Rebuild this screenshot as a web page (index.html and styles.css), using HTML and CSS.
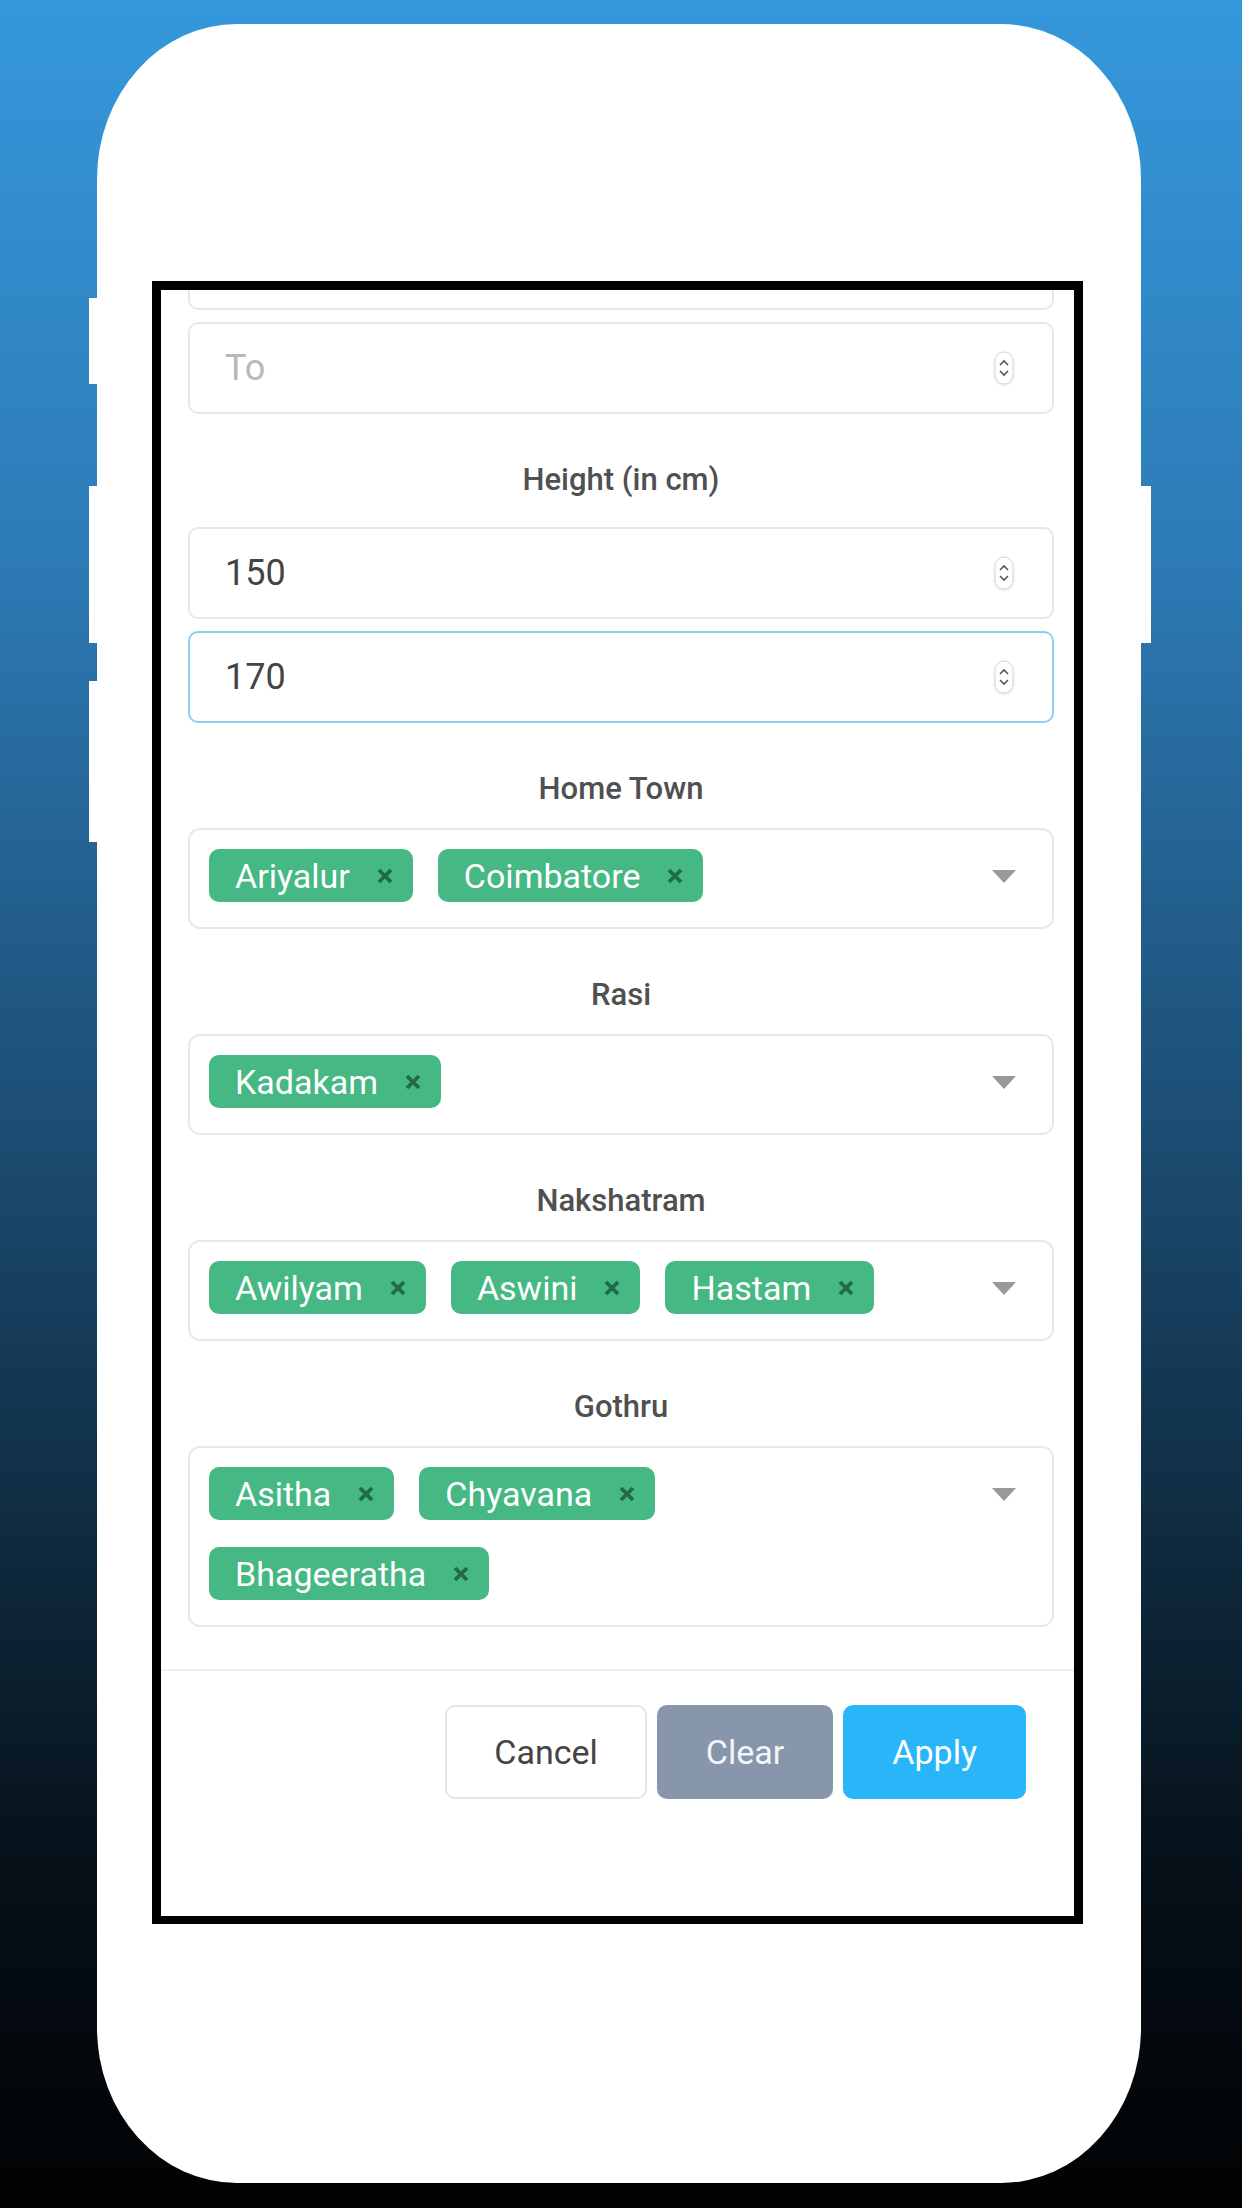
FILE: index.html
```html
<!DOCTYPE html>
<html>
<head>
    <title>Filter</title>
    <meta name="viewport" content="width=device-width, initial-scale=1">
    <link rel="stylesheet" href="styles.css">
</head>
<body>
    <div class="phone">
        <!-- side keys -->
        <span class="key key-left key-1"></span>
        <span class="key key-left key-2"></span>
        <span class="key key-left key-3"></span>
        <span class="key key-right key-2"></span>

        <div class="frame">
            <div class="sheet-body">
                <div class="num-input partial"></div>
                <div class="num-input">
                    <span class="placeholder">To</span>
                    <svg class="spin" width="20" height="34" viewBox="0 0 20 34"><rect x="1" y="1" width="18" height="32" rx="9" fill="#fff" stroke="#d6d6d6"/><path d="M6 14l4-4 4 4M6 20l4 4 4-4" fill="none" stroke="#555" stroke-width="1.6"/></svg>
                </div>

                <div class="field-label">Height (in cm)</div>
                <div class="num-input first">
                    <span>150</span>
                    <svg class="spin" width="20" height="34" viewBox="0 0 20 34"><rect x="1" y="1" width="18" height="32" rx="9" fill="#fff" stroke="#d6d6d6"/><path d="M6 14l4-4 4 4M6 20l4 4 4-4" fill="none" stroke="#555" stroke-width="1.6"/></svg>
                </div>
                <div class="num-input focused">
                    <span>170</span>
                    <svg class="spin" width="20" height="34" viewBox="0 0 20 34"><rect x="1" y="1" width="18" height="32" rx="9" fill="#fff" stroke="#d6d6d6"/><path d="M6 14l4-4 4 4M6 20l4 4 4-4" fill="none" stroke="#555" stroke-width="1.6"/></svg>
                </div>

                <div class="field-label">Home Town</div>
                <div class="multi">
                    <div class="tags">
                        <span class="tag">Ariyalur<svg class="x" width="16" height="16" viewBox="0 0 16 16"><path d="M2 2l12 12M14 2L2 14"/></svg></span>
                        <span class="tag">Coimbatore<svg class="x" width="16" height="16" viewBox="0 0 16 16"><path d="M2 2l12 12M14 2L2 14"/></svg></span>
                    </div>
                    <span class="caret"></span>
                </div>

                <div class="field-label">Rasi</div>
                <div class="multi">
                    <div class="tags">
                        <span class="tag">Kadakam<svg class="x" width="16" height="16" viewBox="0 0 16 16"><path d="M2 2l12 12M14 2L2 14"/></svg></span>
                    </div>
                    <span class="caret"></span>
                </div>

                <div class="field-label">Nakshatram</div>
                <div class="multi">
                    <div class="tags">
                        <span class="tag">Awilyam<svg class="x" width="16" height="16" viewBox="0 0 16 16"><path d="M2 2l12 12M14 2L2 14"/></svg></span>
                        <span class="tag">Aswini<svg class="x" width="16" height="16" viewBox="0 0 16 16"><path d="M2 2l12 12M14 2L2 14"/></svg></span>
                        <span class="tag">Hastam<svg class="x" width="16" height="16" viewBox="0 0 16 16"><path d="M2 2l12 12M14 2L2 14"/></svg></span>
                    </div>
                    <span class="caret"></span>
                </div>

                <div class="field-label">Gothru</div>
                <div class="multi">
                    <div class="tags">
                        <span class="tag">Asitha<svg class="x" width="16" height="16" viewBox="0 0 16 16"><path d="M2 2l12 12M14 2L2 14"/></svg></span>
                        <span class="tag">Chyavana<svg class="x" width="16" height="16" viewBox="0 0 16 16"><path d="M2 2l12 12M14 2L2 14"/></svg></span>
                        <span class="tag">Bhageeratha<svg class="x" width="16" height="16" viewBox="0 0 16 16"><path d="M2 2l12 12M14 2L2 14"/></svg></span>
                    </div>
                    <span class="caret"></span>
                </div>
            </div>

            <div class="sheet-footer">
                <button class="btn btn-cancel">Cancel</button>
                <button class="btn btn-clear">Clear</button>
                <button class="btn btn-apply">Apply</button>
            </div>
        </div>
    </div>
</body>
</html>
```

FILE: styles.css
```css
/* page */
html, body {
    margin: 0;
    height: 2208px;
    overflow: hidden;
}

body {
    font-family: Roboto, "Noto Sans", sans-serif;
    background: linear-gradient(to bottom,
        #3598dc 0%,
        #2d7bb6 25%,
        #1d4f76 50%,
        #0f2a3e 70%,
        #061018 85%,
        #010203 100%);
}

/* phone body */
.phone {
    position: relative;
    box-sizing: border-box;
    width: 1044px;
    height: 2159px;
    margin: 24px 0 0 97px;
    padding: 257px 0 0 55px;
    background: #fff;
    border-radius: 140px / 155px;
}

.key {
    position: absolute;
    width: 10px;
    background: #fff;
}

.key-left { left: -8px; }
.key-right { right: -10px; }
.key-1 { top: 274px; height: 86px; }
.key-2 { top: 462px; height: 157px; }
.key-3 { top: 657px; height: 161px; }

/* screen frame */
.frame {
    box-sizing: border-box;
    width: 931px;
    height: 1643px;
    border: 9px solid #000;
    border-bottom-width: 8px;
    overflow: hidden;
    background: #fff;
}

.sheet-body {
    padding: 0 20px 0 27px;
}

/* number inputs */
.num-input {
    box-sizing: border-box;
    height: 92px;
    margin-top: 12px;
    padding: 0 38px 0 35px;
    display: flex;
    align-items: center;
    justify-content: space-between;
    border: 2px solid #e8e8e8;
    border-radius: 10px;
    font-size: 36px;
    color: #444;
}

.num-input.partial {
    margin-top: -72px;
}

.num-input.first {
    margin-top: 27px;
}

.num-input.focused {
    border-color: #8dcdf1;
}

.placeholder {
    color: #b8b8b8;
}

.spin {
    display: block;
    filter: drop-shadow(0 1px 1px rgba(0, 0, 0, 0.12));
}

/* labels */
.field-label {
    margin: 46px 0 19px;
    line-height: 40px;
    text-align: center;
    font-size: 31px;
    font-weight: 500;
    color: #505050;
}

/* multi select */
.multi {
    box-sizing: border-box;
    display: flex;
    align-items: flex-start;
    padding: 19px 36px 25px 19px;
    border: 2px solid #e8e8e8;
    border-radius: 12px;
}

.tags {
    flex: 1;
    display: flex;
    flex-wrap: wrap;
    gap: 27px 25px;
}

.tag {
    display: flex;
    align-items: center;
    height: 53px;
    padding: 0 20px 0 26px;
    background: #45b883;
    border-radius: 10px;
    color: #fff;
    font-size: 34px;
}

.tag .x {
    margin-left: 27px;
    stroke: #1f6a47;
    stroke-width: 3.8;
    fill: none;
}

.caret {
    width: 0;
    height: 0;
    margin: 21px 0 0 50px;
    border-left: 12.5px solid transparent;
    border-right: 12.5px solid transparent;
    border-top: 13px solid #999;
}

/* footer */
.sheet-footer {
    margin-top: 42px;
    padding: 34px 48px 0 0;
    border-top: 2px solid #efefef;
    display: flex;
    justify-content: flex-end;
    gap: 10px;
}

.btn {
    height: 94px;
    padding: 0 47px;
    border: 2px solid transparent;
    border-radius: 10px;
    font-family: Roboto, "Noto Sans", sans-serif;
    font-size: 34px;
}

.btn-cancel {
    background: #fff;
    border-color: #e6e6e6;
    color: #444;
}

.btn-clear {
    background: #8796aa;
    color: #f3f5f8;
}

.btn-apply {
    background: #29b6f8;
    color: #fff;
}
```
